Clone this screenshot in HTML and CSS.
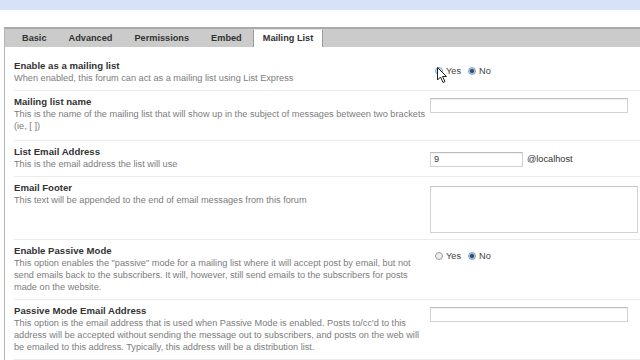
FILE: index.html
```html
<!DOCTYPE html>
<html lang="en">
<head>
    <meta charset="UTF-8">
    <title>Forum Settings - Mailing List</title>
    <link rel="stylesheet" href="styles.css">
</head>
<body>
    <div class="topbar"></div>
    <div class="settings">
        <div class="tabs">
            <div class="tab">Basic</div>
            <div class="tab">Advanced</div>
            <div class="tab">Permissions</div>
            <div class="tab">Embed</div>
            <div class="tab active">Mailing List</div>
        </div>
        <div class="panel">
            <div class="row first">
                <div class="info">
                    <div class="title">Enable as a mailing list</div>
                    <div class="desc">When enabled, this forum can act as a mailing list using List Express</div>
                </div>
                <div class="control radios">
                    <span class="radio hover"></span><span class="opt">Yes</span>
                    <span class="radio checked"></span><span class="opt">No</span>
                    <svg class="cursor" width="11" height="17" viewBox="0 0 11 17">
                        <path d="M0.5 0.5 L0.5 13 L3.5 10 L6 15.5 L8 14.5 L5.5 9.5 L9.5 9.5 Z" fill="#fff" stroke="#222" stroke-width="1"/>
                    </svg>
                </div>
            </div>
            <div class="row tall">
                <div class="info">
                    <div class="title">Mailing list name</div>
                    <div class="desc">This is the name of the mailing list that will show up in the subject of messages between two brackets (ie, [ ])</div>
                </div>
                <div class="control">
                    <div class="input wide"></div>
                </div>
            </div>
            <div class="row">
                <div class="info">
                    <div class="title">List Email Address</div>
                    <div class="desc">This is the email address the list will use</div>
                </div>
                <div class="control inline">
                    <div class="input short">9</div>
                    <span class="suffix">@localhost</span>
                </div>
            </div>
            <div class="row">
                <div class="info">
                    <div class="title">Email Footer</div>
                    <div class="desc">This text will be appended to the end of email messages from this forum</div>
                </div>
                <div class="control">
                    <div class="textarea"></div>
                </div>
            </div>
            <div class="row">
                <div class="info">
                    <div class="title">Enable Passive Mode</div>
                    <div class="desc">This option enables the "passive" mode for a mailing list where it will accept post by email, but not send emails back to the subscribers. It will, however, still send emails to the subscribers for posts made on the website.</div>
                </div>
                <div class="control radios">
                    <span class="radio"></span><span class="opt">Yes</span>
                    <span class="radio checked"></span><span class="opt">No</span>
                </div>
            </div>
            <div class="row">
                <div class="info">
                    <div class="title">Passive Mode Email Address</div>
                    <div class="desc">This option is the email address that is used when Passive Mode is enabled. Posts to/cc'd to this address will be accepted without sending the message out to subscribers, and posts on the web will be emailed to this address. Typically, this address will be a distribution list.</div>
                </div>
                <div class="control">
                    <div class="input wide"></div>
                </div>
            </div>
        </div>
    </div>
</body>
</html>
```

FILE: styles.css
```css
body {
    margin: 0;
    font-family: 'Liberation Sans', Arial, sans-serif;
    font-size: 9.2px;
    color: #333;
    background: white;
    overflow: hidden;
}
.topbar {
    height: 10px;
    background: #d7e1f8;
    margin-bottom: 17px;
}
.settings {
    margin-left: 4px;
}
.tabs {
    display: flex;
    align-items: flex-end;
    height: 18px;
    padding-left: 6px;
    background: #cbcbcb;
    border-top: 2px solid #a9a9a9;
    border-left: 1px solid #b5b5b5;
}
.tab {
    padding: 0 11px;
    height: 17px;
    line-height: 16px;
    font-size: 9.2px;
    font-weight: bold;
    color: #333;
}
.tab.active {
    background: white;
    padding: 0 9px;
    border-left: 1px solid #9a9a9a;
    border-right: 1px solid #9a9a9a;
    border-top: 1px solid #e0e0e0;
}
.panel {
    border-left: 1px solid #b5b5b5;
    padding-left: 9px;
}
.row {
    display: grid;
    grid-template-columns: 415px 1fr;
    gap: 1px;
    padding: 5px 0 6px;
    border-bottom: 1px solid #ececec;
}
.row.first {
    padding-top: 13px;
}
.row.tall {
    padding-bottom: 8px;
}
.title {
    font-size: 9.6px;
    font-weight: bold;
    color: #333;
    line-height: 12px;
}
.desc {
    color: #7c7c7c;
    line-height: 12px;
}
.control {
    padding-top: 2px;
}
.radios {
    position: relative;
    display: flex;
    align-items: center;
    padding-top: 6px;
    height: 10px;
    color: #444;
}
.radio {
    width: 6px;
    height: 6px;
    border-radius: 50%;
    border: 1px solid #9a9a9a;
    background: #eee;
    margin: 0 3px 0 5px;
}
.radio.hover {
    border-color: #7fa7c9;
    background: #d6e6f2;
}
.radio.checked {
    margin-left: 7px;
    background: radial-gradient(circle, #2d4f7a 0, #2d4f7a 1.6px, #a9c4dd 2.4px);
    border-color: #8aa6c0;
}
.cursor {
    position: absolute;
    left: 7px;
    top: 7px;
}
.input {
    height: 13px;
    border: 1px solid #d2d2d2;
    border-top-color: #bdbdbd;
    background: white;
    box-shadow: inset 0 1px 1px rgba(0,0,0,0.06);
    line-height: 13px;
    padding-left: 3px;
    color: #333;
    box-sizing: content-box;
}
.input.wide {
    width: 193px;
}
.inline {
    display: flex;
    align-items: center;
    gap: 4px;
}
.input.short {
    width: 88px;
}
.suffix {
    color: #333;
}
.textarea {
    height: 45px;
    border: 1px solid #d2d2d2;
    border-top-color: #c4c4c4;
    background: white;
    margin-top: 2px;
    width: 206px;
}
```
